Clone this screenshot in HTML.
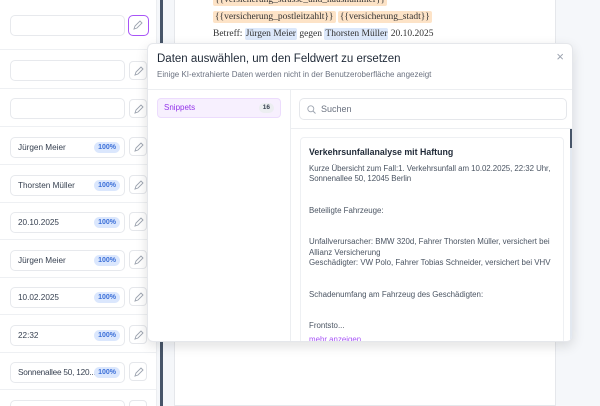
<!DOCTYPE html>
<html><head><meta charset="utf-8"><style>
*{box-sizing:border-box;margin:0;padding:0}
html,body{width:600px;height:406px;overflow:hidden}
body{background:#f5f7fa;font-family:"Liberation Sans",sans-serif;position:relative;color:#1f2937}
.left{position:absolute;left:0;top:0;width:157px;height:406px;background:#fff;border-right:1px solid #eceef1;overflow:hidden}
.row{position:absolute;left:0;width:157px;border-bottom:1px solid #eef0f3}
.inp{position:absolute;left:10px;width:115px;height:21px;border:1px solid #e7e9ed;border-radius:5px;font-size:8.2px;line-height:19px;padding-left:7px;color:#374151;white-space:nowrap}
.badge{position:absolute;right:4px;top:4px;background:#dbe7fd;color:#3b6fd8;font-size:7px;font-weight:bold;border-radius:6px;padding:0 4px;line-height:11px}
.pen{position:absolute;left:129px;width:18px;height:19px;border:1px solid #e5e7eb;border-radius:4px;background:#fff}
.pen svg{position:absolute;left:4px;top:4px}
.bar{position:absolute;left:160px;top:0;width:3px;height:406px;background:#475569}
.doc{position:absolute;left:174px;top:-2px;width:382px;height:408px;background:#fff;border:1px solid #e5e7eb;overflow:hidden}
.ser{font-family:"Liberation Serif",serif;font-size:9.5px;color:#333;white-space:nowrap}
.or{background:#fde3c7;border-radius:2px;padding:1px 2px}
.bl{background:#dce8fb;border-radius:2px;padding:1px 1px}
.pop{position:absolute;left:147px;top:43px;width:426px;height:299px;background:#fff;border:1px solid #e5e7eb;border-radius:6px;box-shadow:0 4px 12px rgba(0,0,0,.12);overflow:hidden}
</style></head><body>
<div class="left">
<div class="row" style="top:0;height:50px"><div class="inp" style="top:15px"></div><div class="pen" style="top:15px;left:128px;width:21px;height:21px;border:1.5px solid #a855f7;border-radius:5px"><svg width="10" height="10" viewBox="0 0 10 10"><path d="M1 9l1-3 5-5 2 2-5 5z" fill="none" stroke="#9ca3af" stroke-width=".9"/></svg></div></div>
<div class="row" style="top:50px;height:39px"><div class="inp" style="top:10px"></div><div class="pen" style="top:11px"><svg width="10" height="10" viewBox="0 0 10 10"><path d="M1 9l1-3 5-5 2 2-5 5z" fill="none" stroke="#9ca3af" stroke-width=".9"/></svg></div></div>
<div class="row" style="top:89px;height:38px"><div class="inp" style="top:9px"></div><div class="pen" style="top:10px"><svg width="10" height="10" viewBox="0 0 10 10"><path d="M1 9l1-3 5-5 2 2-5 5z" fill="none" stroke="#9ca3af" stroke-width=".9"/></svg></div></div>
<div class="row" style="top:127px;height:38px"><div class="inp" style="top:10px">Jürgen Meier<span class="badge">100%</span></div><div class="pen" style="top:10px"><svg width="10" height="10" viewBox="0 0 10 10"><path d="M1 9l1-3 5-5 2 2-5 5z" fill="none" stroke="#9ca3af" stroke-width=".9"/></svg></div></div>
<div class="row" style="top:165px;height:38px"><div class="inp" style="top:10px">Thorsten Müller<span class="badge">100%</span></div><div class="pen" style="top:10px"><svg width="10" height="10" viewBox="0 0 10 10"><path d="M1 9l1-3 5-5 2 2-5 5z" fill="none" stroke="#9ca3af" stroke-width=".9"/></svg></div></div>
<div class="row" style="top:203px;height:37px"><div class="inp" style="top:9px">20.10.2025<span class="badge">100%</span></div><div class="pen" style="top:9px"><svg width="10" height="10" viewBox="0 0 10 10"><path d="M1 9l1-3 5-5 2 2-5 5z" fill="none" stroke="#9ca3af" stroke-width=".9"/></svg></div></div>
<div class="row" style="top:240px;height:38px"><div class="inp" style="top:10px">Jürgen Meier<span class="badge">100%</span></div><div class="pen" style="top:10px"><svg width="10" height="10" viewBox="0 0 10 10"><path d="M1 9l1-3 5-5 2 2-5 5z" fill="none" stroke="#9ca3af" stroke-width=".9"/></svg></div></div>
<div class="row" style="top:278px;height:37px"><div class="inp" style="top:9px">10.02.2025<span class="badge">100%</span></div><div class="pen" style="top:9px"><svg width="10" height="10" viewBox="0 0 10 10"><path d="M1 9l1-3 5-5 2 2-5 5z" fill="none" stroke="#9ca3af" stroke-width=".9"/></svg></div></div>
<div class="row" style="top:315px;height:38px"><div class="inp" style="top:10px">22:32<span class="badge">100%</span></div><div class="pen" style="top:10px"><svg width="10" height="10" viewBox="0 0 10 10"><path d="M1 9l1-3 5-5 2 2-5 5z" fill="none" stroke="#9ca3af" stroke-width=".9"/></svg></div></div>
<div class="row" style="top:353px;height:37px"><div class="inp" style="top:9px;letter-spacing:-.2px">Sonnenallee 50, 120...<span class="badge" style="letter-spacing:0">100%</span></div><div class="pen" style="top:9px"><svg width="10" height="10" viewBox="0 0 10 10"><path d="M1 9l1-3 5-5 2 2-5 5z" fill="none" stroke="#9ca3af" stroke-width=".9"/></svg></div></div>
<div class="row" style="top:390px;height:16px;border:none"><div class="inp" style="top:10px"></div><div class="pen" style="top:10px"></div></div>
</div>
<div class="bar"></div>
<div class="doc">
<div class="ser" style="position:absolute;left:38px;top:-4px"><span class="or">{{versicherung_strasse_und_hausnummer}}</span></div>
<div class="ser" style="position:absolute;left:38px;top:13px"><span class="or">{{versicherung_postleitzahlt}}</span> <span class="or">{{versicherung_stadt}}</span></div>
<div class="ser" style="position:absolute;left:38px;top:30px">Betreff: <span class="bl">Jürgen Meier</span> gegen <span class="bl">Thorsten Müller</span> 20.10.2025</div>
</div>
<div class="pop">
<div style="position:absolute;left:9px;top:9px;font-size:11.5px;color:#1f2937">Daten auswählen, um den Feldwert zu ersetzen</div>
<div style="position:absolute;left:9px;top:26px;font-size:8px;color:#6b7280">Einige KI-extrahierte Daten werden nicht in der Benutzeroberfläche angezeigt</div>
<div style="position:absolute;right:8px;top:5px;font-size:13px;color:#9ca3af">×</div>
<div style="position:absolute;left:0;top:45px;width:426px;border-top:1px solid #eceef1"></div>
<div style="position:absolute;left:142px;top:45px;height:260px;border-left:1px solid #eceef1"></div>
<div style="position:absolute;left:9px;top:54px;width:124px;height:20px;background:#f7f0fe;border:1px solid #ecdcfd;border-radius:4px;font-size:8px;color:#9333ea;line-height:18px;padding-left:6px">Snippets<span style="position:absolute;right:6px;top:4px;background:#eceef1;color:#374151;border-radius:5px;font-size:6.5px;line-height:10px;padding:0 4px;font-weight:bold">16</span></div>
<div style="position:absolute;left:151px;top:54px;width:268px;height:22px;border:1px solid #e5e7eb;border-radius:5px;font-size:9px;color:#6b7280;line-height:20px;padding-left:21px"><svg style="position:absolute;left:7px;top:6px" width="9" height="9" viewBox="0 0 9 9"><circle cx="3.8" cy="3.8" r="3" fill="none" stroke="#9ca3af" stroke-width=".9"/><path d="M6 6l2.5 2.5" stroke="#9ca3af" stroke-width=".9"/></svg>Suchen</div>
<div style="position:absolute;left:142px;top:84px;width:284px;border-top:1px solid #eceef1"></div>
<div style="position:absolute;left:152px;top:93px;width:264px;height:220px;border:1px solid #eef0f3;border-radius:4px;padding:9px 6px 9px 8px;font-size:7.9px;color:#4b5563;line-height:10.5px">
<div style="font-size:8.8px;font-weight:bold;color:#1f2937;margin-bottom:6px">Verkehrsunfallanalyse mit Haftung</div>
<div style="letter-spacing:-.05px">Kurze Übersicht zum Fall:1. Verkehrsunfall am 10.02.2025, 22:32 Uhr,<br>Sonnenallee 50, 12045 Berlin</div>
<div style="margin-top:21px">Beteiligte Fahrzeuge:</div>
<div style="margin-top:21px">Unfallverursacher: BMW 320d, Fahrer Thorsten Müller, versichert bei<br>Allianz Versicherung<br>Geschädigter: VW Polo, Fahrer Tobias Schneider, versichert bei VHV</div>
<div style="margin-top:21px">Schadenumfang am Fahrzeug des Geschädigten:</div>
<div style="margin-top:21px">Frontsto...</div>
<div style="margin-top:3px;color:#a855f7">mehr anzeigen</div>
</div>
<div style="position:absolute;left:422px;top:85px;width:3px;height:214px;background:#e2e8f0"></div>
<div style="position:absolute;left:422px;top:85px;width:3px;height:19px;background:#475569"></div>
</div>
</body></html>
